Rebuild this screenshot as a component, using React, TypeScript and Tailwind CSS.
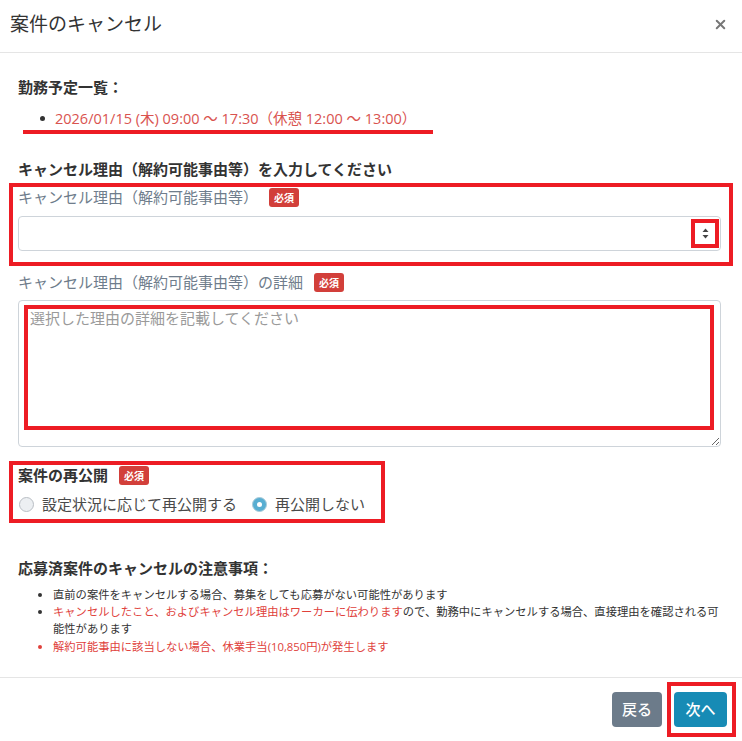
import { X } from 'lucide-react'

const FONT = { fontFamily: '"Open Sans", "Noto Sans CJK JP", sans-serif' }

function Badge() {
  return (
    <span className="ml-[11px] inline-flex h-[19px] items-center rounded-[3px] bg-[#d23f3a] px-[5px] text-[10px] font-bold leading-none text-white">
      必須
    </span>
  )
}

function Radio({ checked, label }: { checked?: boolean; label: string }) {
  return (
    <label className="flex items-center gap-[8px]">
      {checked ? (
        <span className="flex h-[15px] w-[15px] items-center justify-center rounded-full border border-[#a9cbd9] bg-[#58aed2]">
          <span className="h-[5px] w-[5px] rounded-full bg-white" />
        </span>
      ) : (
        <span className="h-[15px] w-[15px] rounded-full border border-[#b9bec4] bg-[#eceff2]" />
      )}
      <span className="text-[15px] leading-[21px] text-[#4a4a4a]">{label}</span>
    </label>
  )
}

export default function App() {
  return (
    <div className="min-h-[741px] w-[742px] bg-white text-[#333]" style={FONT}>
      {/* Header */}
      <div className="flex h-[53px] items-center justify-between border-b border-[#e5e5e5] pb-[4px] pl-[10px] pr-[14px]">
        <h1 className="text-[19px] font-normal leading-[24px] text-[#333]">案件のキャンセル</h1>
        <X className="h-[15px] w-[15px] text-[#777]" strokeWidth={3.2} />
      </div>

      {/* Body */}
      <div className="pb-[22px] pl-[18px] pr-[21px] pt-[24px]">
        <h2 className="text-[15px] font-bold leading-[21px]">勤務予定一覧：</h2>
        <ul className="mt-[10px] pl-[22px]">
          <li className="flex items-center text-[14.5px] leading-[21px] text-[#d9534f]">
            <span className="mr-[10px] h-[5px] w-[5px] rounded-full bg-[#333]" />
            2026/01/15 (木) 09:00 ～ 17:30（休憩 12:00 ～ 13:00）
          </li>
        </ul>
        <div className="ml-[5px] mt-[1px] h-[4px] w-[410px] bg-[#ed1c24]" />

        <h2 className="mt-[25px] text-[15px] font-bold leading-[21px]">
          キャンセル理由（解約可能事由等）を入力してください
        </h2>

        {/* Reason select */}
        <div className="-ml-[9px] -mr-[12px] mt-[3px] border-4 border-[#ed1c24] pb-[11px] pl-[5px] pr-[8px]">
          <div className="flex items-center text-[15px] leading-[21px] text-[#6f7d8c]">
            キャンセル理由（解約可能事由等）
            <Badge />
          </div>
          <div className="relative mt-[8px] h-[35px] rounded-[4px] border border-[#ced4da] bg-white">
            <div className="absolute right-[1px] top-[2px] flex h-[29px] w-[28px] items-center justify-center border-4 border-[#ed1c24]">
              <svg width="7" height="11" viewBox="0 0 7 11">
                <path d="M3.5 0.5 L6.5 4 H0.5 Z" fill="#444" />
                <path d="M3.5 10.5 L6.5 7 H0.5 Z" fill="#444" />
              </svg>
            </div>
          </div>
        </div>

        <div className="mt-[6px] flex items-center text-[15px] leading-[21px] text-[#6f7d8c]">
          キャンセル理由（解約可能事由等）の詳細
          <Badge />
        </div>
        <div className="relative mt-[7px]">
          <textarea
            className="block h-[147px] w-full resize-y rounded-[4px] border border-[#ced4da] px-[11px] py-[7px] text-[15px] leading-[21px] text-[#333] outline-none placeholder:text-[#9a9a9a]"
            placeholder="選択した理由の詳細を記載してください"
          />
          <div className="pointer-events-none absolute left-[6px] right-[7px] top-[5px] h-[125px] border-4 border-[#ed1c24]" />
        </div>

        {/* Republish */}
        <div className="-ml-[9px] mt-[14px] w-fit border-4 border-[#ed1c24] pb-[4px] pl-[5px] pr-[16px]">
          <div className="flex items-center text-[15px] font-bold leading-[21px]">
            案件の再公開
            <Badge />
          </div>
          <div className="mt-[8px] flex items-center gap-[15px] pl-[1px]">
            <Radio label="設定状況に応じて再公開する" />
            <Radio checked label="再公開しない" />
          </div>
        </div>

        <h2 className="mt-[35px] text-[15px] font-bold leading-[21px]">応募済案件のキャンセルの注意事項：</h2>
        <ul className="-mr-[2px] mt-[7px] list-disc pl-[35px] text-[11.3px] leading-[17px] text-[#333]">
          <li>直前の案件をキャンセルする場合、募集をしても応募がない可能性があります</li>
          <li>
            <span className="text-[#e0413b]">キャンセルしたこと、およびキャンセル理由はワーカーに伝わります</span>
            ので、勤務中にキャンセルする場合、直接理由を確認される可能性があります
          </li>
          <li className="mt-[1px] text-[#e0413b]">解約可能事由に該当しない場合、休業手当(10,850円)が発生します</li>
        </ul>
      </div>

      {/* Footer */}
      <div className="flex h-[64px] items-center justify-end gap-[5px] border-t border-[#e5e5e5] pr-[6px]">
        <button className="h-[35px] w-[50px] rounded-[4px] bg-[#6c7b8a] text-[15px] font-medium text-white">
          戻る
        </button>
        <div className="border-4 border-[#ed1c24] pb-[6px] pl-[3px] pr-[5px] pt-[6px]">
          <button className="h-[35px] w-[53px] rounded-[4px] bg-[#178bb5] text-[15px] font-medium text-white">
            次へ
          </button>
        </div>
      </div>
    </div>
  )
}
